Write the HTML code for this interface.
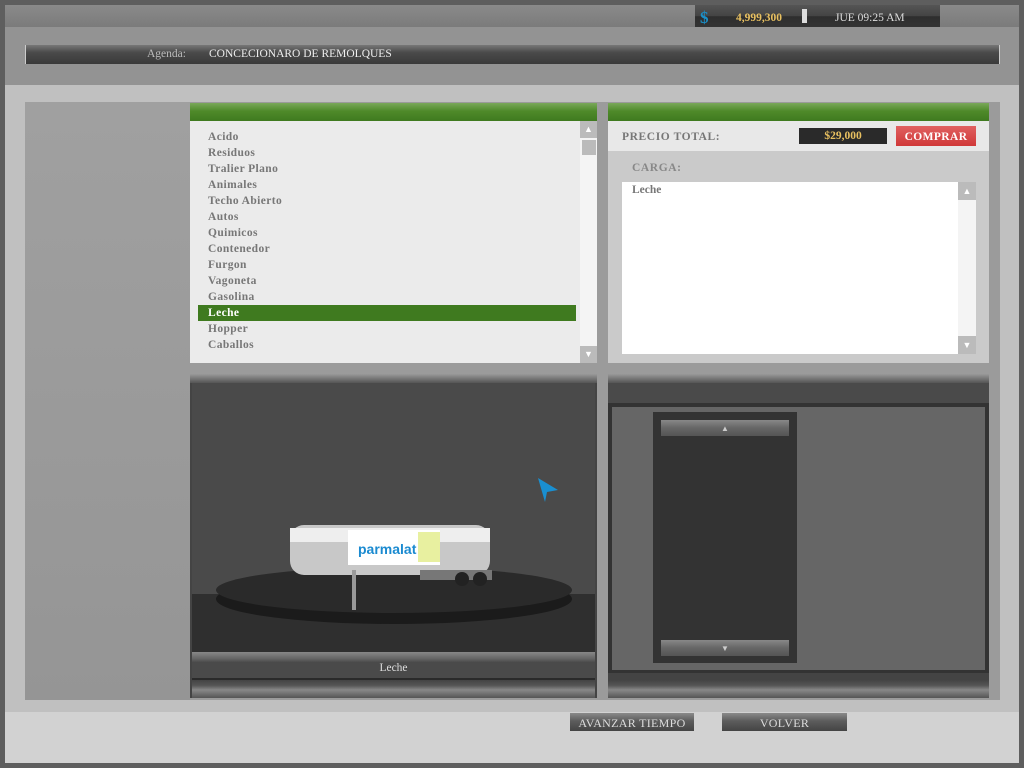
<!DOCTYPE html>
<html><head><meta charset="utf-8"><style>
*{margin:0;padding:0;box-sizing:border-box}
body{width:1024px;height:768px;background:#5e5e5e;position:relative;overflow:hidden;font-family:"Liberation Serif",serif;}
.a{position:absolute}
.g{background:linear-gradient(#7aa85a,#4f8a2a 45%,#3f7a1f)}
.li{position:absolute;left:208px;font-size:11.5px;color:#777;font-weight:bold;letter-spacing:.4px}
.btn{background:linear-gradient(#8a8a8a,#5c5c5c 45%,#444);color:#ddd;font-size:12px;text-align:center;line-height:20px;letter-spacing:.3px}
</style></head><body>
<div class="a" style="left:5px;top:5px;width:1014px;height:758px;background:#939393"></div>
<div class="a" style="left:5px;top:5px;width:1014px;height:22px;background:linear-gradient(#8a8a8a,#7b7b7b)"></div>
<div class="a" style="left:5px;top:27px;width:1014px;height:58px;background:#939393"></div>
<div class="a" style="left:5px;top:85px;width:1014px;height:627px;background:#c0c0c0"></div>
<div class="a" style="left:5px;top:712px;width:1014px;height:51px;background:#d2d2d2"></div>
<div class="a" style="left:695px;top:5px;width:245px;height:22px;background:linear-gradient(#555 0,#444 50%,#2e2e2e 52%,#333)"></div>
<div class="a" style="left:700px;top:8px;color:#1a8fc8;font-size:17px;font-weight:bold">$</div>
<div class="a" style="left:736px;top:12px;color:#e8c060;font-size:11.5px;font-weight:bold">4,999,300</div>
<div class="a" style="left:802px;top:9px;width:5px;height:14px;background:#ddd"></div>
<div class="a" style="left:835px;top:12px;color:#ddd;font-size:11.5px">JUE 09:25 AM</div>
<div class="a" style="left:25px;top:45px;width:975px;height:19px;background:linear-gradient(#777,#4a4a4a 40%,#3a3a3a);border-left:1px solid #ccc;border-right:1px solid #ccc"></div>
<div class="a" style="left:147px;top:48px;color:#bbb;font-size:11.5px">Agenda:</div>
<div class="a" style="left:209px;top:48px;color:#eee;font-size:11.5px">CONCECIONARO DE REMOLQUES</div>
<div class="a" style="left:25px;top:102px;width:975px;height:598px;background:#9b9b9b"></div>
<div class="a" style="left:25px;top:102px;width:165px;height:598px;background:linear-gradient(#a0a0a0,#959595)"></div>
<div class="a g" style="left:190px;top:103px;width:407px;height:18px"></div>
<div class="a" style="left:190px;top:121px;width:407px;height:242px;background:#ebebeb"></div>
<div class="a" style="left:580px;top:121px;width:17px;height:242px;background:#f4f4f4"></div>
<div class="a" style="left:580px;top:121px;width:17px;height:17px;background:#bbb;color:#fff;font-size:9px;text-align:center;line-height:17px">▲</div>
<div class="a" style="left:582px;top:140px;width:14px;height:15px;background:#bbb"></div>
<div class="a" style="left:580px;top:346px;width:17px;height:17px;background:#bbb;color:#fff;font-size:9px;text-align:center;line-height:17px">▼</div>
<div class="a" style="left:198px;top:305px;width:378px;height:16px;background:#3f7a1f"></div>
<div class="li" style="top:131px">Acido</div>
<div class="li" style="top:147px">Residuos</div>
<div class="li" style="top:163px">Tralier Plano</div>
<div class="li" style="top:179px">Animales</div>
<div class="li" style="top:195px">Techo Abierto</div>
<div class="li" style="top:211px">Autos</div>
<div class="li" style="top:227px">Quimicos</div>
<div class="li" style="top:243px">Contenedor</div>
<div class="li" style="top:259px">Furgon</div>
<div class="li" style="top:275px">Vagoneta</div>
<div class="li" style="top:291px">Gasolina</div>
<div class="li" style="top:307px;color:#fff">Leche</div>
<div class="li" style="top:323px">Hopper</div>
<div class="li" style="top:339px">Caballos</div>
<div class="a g" style="left:608px;top:103px;width:381px;height:18px"></div>
<div class="a" style="left:608px;top:121px;width:381px;height:30px;background:#e8e8e8"></div>
<div class="a" style="left:608px;top:151px;width:381px;height:212px;background:#cacaca"></div>
<div class="a" style="left:622px;top:131px;color:#777;font-size:11.5px;font-weight:bold;letter-spacing:.6px">PRECIO TOTAL:</div>
<div class="a" style="left:799px;top:128px;width:88px;height:16px;background:#2a2a2a;color:#e8c060;font-size:11.5px;font-weight:bold;text-align:center;line-height:17px">$29,000</div>
<div class="a" style="left:896px;top:126px;width:80px;height:20px;background:linear-gradient(#e06060,#d03838);color:#fff;font-size:11.5px;font-weight:bold;text-align:center;line-height:22px;letter-spacing:.4px">COMPRAR</div>
<div class="a" style="left:632px;top:162px;color:#888;font-size:11.5px;font-weight:bold;letter-spacing:.6px">CARGA:</div>
<div class="a" style="left:622px;top:182px;width:337px;height:172px;background:#fff"></div>
<div class="a" style="left:632px;top:184px;color:#777;font-size:11.5px;font-weight:bold">Leche</div>
<div class="a" style="left:958px;top:182px;width:18px;height:172px;background:#f4f4f4"></div>
<div class="a" style="left:958px;top:182px;width:18px;height:18px;background:#bbb;color:#fff;font-size:9px;text-align:center;line-height:18px">▲</div>
<div class="a" style="left:958px;top:336px;width:18px;height:18px;background:#bbb;color:#fff;font-size:9px;text-align:center;line-height:18px">▼</div>
<div class="a" style="left:190px;top:374px;width:407px;height:324px;background:#444"></div>
<div class="a" style="left:190px;top:374px;width:407px;height:9px;background:linear-gradient(#999,#777 50%,#555)"></div>
<div class="a" style="left:192px;top:383px;width:403px;height:211px;background:#4a4a4a"></div>
<div class="a" style="left:192px;top:594px;width:403px;height:58px;background:#2f2f2f"></div>
<svg class="a" style="left:190px;top:470px" width="407" height="170">
<ellipse cx="204" cy="129" rx="178" ry="25" fill="#1b1b1b"/>
<ellipse cx="204" cy="120" rx="178" ry="23" fill="#2a2a2a"/>
<rect x="100" y="55" width="200" height="50" rx="14" fill="#c8c8c8"/>
<rect x="100" y="58" width="200" height="14" fill="#eee"/>
<rect x="158" y="60" width="92" height="35" fill="#fff"/>
<rect x="228" y="62" width="22" height="30" fill="#e8f0a0"/>
<text x="168" y="84" font-family="Liberation Sans" font-weight="bold" font-size="14" fill="#1a8ad0">parmalat</text>
<rect x="230" y="100" width="72" height="10" fill="#777"/>
<circle cx="272" cy="109" r="7" fill="#222"/><circle cx="290" cy="109" r="7" fill="#222"/>
<rect x="162" y="100" width="4" height="40" fill="#999"/>
</svg>
<svg class="a" style="left:536px;top:476px" width="24" height="28"><path d="M2 2 L22 14 L11 16 L9 26 Z" fill="#1a8fd0"/></svg>
<div class="a" style="left:192px;top:652px;width:403px;height:26px;background:linear-gradient(#888,#666 25%,#4a4a4a 40%,#4a4a4a)"></div>
<div class="a" style="left:192px;top:662px;width:403px;text-align:center;color:#ddd;font-size:11.5px">Leche</div>
<div class="a" style="left:192px;top:678px;width:403px;height:2px;background:#2a2a2a"></div>
<div class="a" style="left:192px;top:680px;width:403px;height:18px;background:linear-gradient(#444,#555 30%,#888 55%,#555)"></div>
<div class="a" style="left:608px;top:374px;width:381px;height:324px;background:#444"></div>
<div class="a" style="left:608px;top:374px;width:381px;height:9px;background:linear-gradient(#999,#777 50%,#555)"></div>
<div class="a" style="left:608px;top:383px;width:381px;height:20px;background:#4a4a4a"></div>
<div class="a" style="left:608px;top:403px;width:381px;height:270px;background:#333"></div>
<div class="a" style="left:612px;top:407px;width:373px;height:263px;background:#666"></div>
<div class="a" style="left:653px;top:412px;width:144px;height:251px;background:#333"></div>
<div class="a" style="left:661px;top:420px;width:128px;height:16px;background:linear-gradient(#888,#666 50%,#555);color:#ccc;font-size:8px;text-align:center;line-height:18px">▲</div>
<div class="a" style="left:661px;top:640px;width:128px;height:16px;background:linear-gradient(#888,#666 50%,#555);color:#ccc;font-size:8px;text-align:center;line-height:18px">▼</div>
<div class="a" style="left:608px;top:680px;width:381px;height:18px;background:linear-gradient(#444,#555 30%,#888 55%,#555)"></div>
<div class="a btn" style="left:570px;top:713px;width:124px;height:18px">AVANZAR TIEMPO</div>
<div class="a btn" style="left:722px;top:713px;width:125px;height:18px">VOLVER</div>
</body></html>
